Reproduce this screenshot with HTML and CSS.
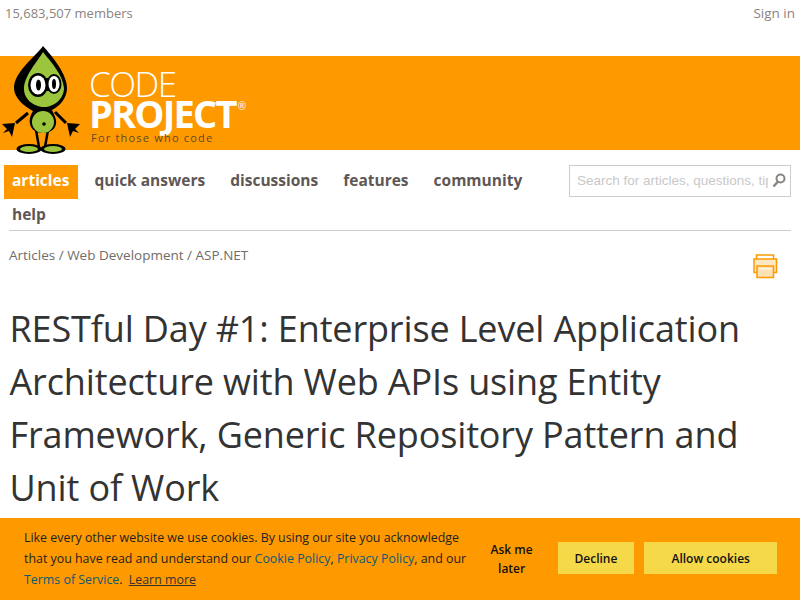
FILE: index.html
```html
<!DOCTYPE html>
<html lang="en">
<head>
    <meta charset="UTF-8">
    <meta name="viewport" content="width=device-width, initial-scale=1.0">
    <title>RESTful Day #1</title>
    <link rel="stylesheet" href="styles.css">
</head>
<body>
    <div class="top-bar">
        <span>15,683,507 members</span>
        <a href="#">Sign in</a>
    </div>
    <header class="banner">
        <svg class="mascot" width="82" height="112" viewBox="0 0 82 112">
            <!-- arms -->
            <path d="M28 69 L16 79 M55 68 L66 79" stroke="#000" stroke-width="3" fill="none"/>
            <path d="M2 80 L15 79 L12 93 L9 87 L3 89 L7 85 Z M80 80 L67 79 L70 93 L73 87 L79 89 L75 85 Z" fill="#000"/>
            <!-- legs -->
            <path d="M36 86 L39 103 M48 86 L45 103" stroke="#000" stroke-width="2.500" fill="none"/>
            <path d="M40 90 L42 103 L44 90 Z" fill="#f90"/>
            <!-- feet -->
            <ellipse cx="29" cy="105" rx="12.500" ry="5" fill="#000"/>
            <ellipse cx="53" cy="105" rx="12.500" ry="5" fill="#000"/>
            <ellipse cx="29" cy="105" rx="9" ry="3" fill="#9bc53d"/>
            <ellipse cx="53" cy="105" rx="9" ry="3" fill="#9bc53d"/>
            <!-- head and body -->
            <path d="M43 2 C36 12 14 28 14 44 C14 54 24 62 33 67 C30 72 29 76 30 80 C32 92 54 92 56 80 C57 75 54 71 52 66 C60 62 67 54 67 44 C67 30 52 12 43 2 Z" fill="#000"/>
            <path d="M43 8 C37 18 24 32 24 45 C24 56 35 63 44 63 C54 63 64 55 64 44 C63 31 51 18 43 8 Z" fill="#9bc53d"/>
            <ellipse cx="43" cy="78" rx="11" ry="11" fill="#9bc53d"/>
            <circle cx="44" cy="80" r="1.800" fill="#000"/>
            <!-- eyes -->
            <ellipse cx="38" cy="41" rx="10" ry="12" fill="#000"/>
            <ellipse cx="54" cy="40" rx="7.500" ry="10" fill="#000"/>
            <path d="M42 34 H52 V47 H42 Z" fill="#000"/>
            <ellipse cx="38" cy="41" rx="7.500" ry="9.500" fill="#fff"/>
            <ellipse cx="54" cy="40" rx="5.500" ry="8" fill="#fff"/>
            <ellipse cx="38.500" cy="41" rx="2.500" ry="5.500" fill="#000"/>
            <ellipse cx="54" cy="40" rx="2" ry="5" fill="#000"/>
        </svg>
        <div class="wordmark">
            <div class="word-code">CODE</div>
            <div class="word-project">PROJECT<sup>®</sup></div>
            <div class="word-tag">For those who code</div>
        </div>
    </header>
    <nav class="main-nav">
        <ul class="nav-list">
            <li class="active"><a href="#">articles</a></li>
            <li><a href="#">quick answers</a></li>
            <li><a href="#">discussions</a></li>
            <li><a href="#">features</a></li>
            <li><a href="#">community</a></li>
            <li><a href="#">help</a></li>
        </ul>
        <form class="search-box">
            <input type="text" placeholder="Search for articles, questions, tips">
            <svg width="14" height="15" viewBox="0 0 14 15">
                <circle cx="8.500" cy="5.500" r="4" fill="none" stroke="#8b8380" stroke-width="2"/>
                <path d="M6 8.500 L1.500 13.500" stroke="#8b8380" stroke-width="2.500"/>
            </svg>
        </form>
    </nav>
    <div class="crumb-row">
        <div class="breadcrumb">Articles / Web Development / ASP.NET</div>
        <svg class="print-icon" width="25" height="25" viewBox="0 0 25 25">
            <rect x="3.500" y="1" width="17" height="6" fill="#fff" stroke="#f90" stroke-width="1.500"/>
            <rect x="1" y="5" width="22.500" height="13.500" fill="#fde8c4" stroke="#f90" stroke-width="1.500"/>
            <rect x="4" y="12" width="16.500" height="11.500" fill="#fde2b4" stroke="#f90" stroke-width="1.500"/>
            <path d="M6 15 H19" stroke="#fff" stroke-width="1"/>
        </svg>
    </div>
    <h1 class="article-title">RESTful Day #1: Enterprise Level Application Architecture with Web APIs using Entity Framework, Generic Repository Pattern and Unit of Work</h1>

    <div class="cookie-bar">
        <p class="cookie-text">Like every other website we use cookies. By using our site you acknowledge that you have read and understand our <a href="#">Cookie Policy</a>, <a href="#">Privacy Policy</a>, and our <a href="#">Terms of Service</a>. <a href="#" class="learn">Learn more</a></p>
        <a href="#" class="ask-later">Ask me later</a>
        <button type="button" class="cookie-btn decline">Decline</button>
        <button type="button" class="cookie-btn allow">Allow cookies</button>
    </div>
</body>
</html>
```

FILE: styles.css
```css
body {
    margin: 0;
    font-family: "Open Sans", "Noto Sans", Arial, sans-serif;
    color: #333;
    background-color: white;
    height: 600px;
    overflow: hidden;
}
a {
    text-decoration: none;
}
.top-bar {
    display: flex;
    justify-content: space-between;
    height: 56px;
    padding: 4px 5px 0;
    box-sizing: border-box;
    font-size: 13px;
    line-height: 18px;
    color: #8b8380;
}
.top-bar a {
    color: #8b8380;
    font-size: 13.500px;
}

/* Orange banner */
.banner {
    display: flex;
    height: 94px;
    background-color: #f90;
}
.mascot {
    margin: -12px 0 0 0;
    flex-shrink: 0;
}
.wordmark {
    margin-left: 7px;
    color: white;
    font-family: "Open Sans", Arial, sans-serif;
}
.word-code {
    font-size: 35px;
    font-weight: 300;
    line-height: 28px;
    margin-top: 14px;
    letter-spacing: -1.500px;
}
.word-project {
    font-size: 38px;
    font-weight: 700;
    line-height: 31px;
    letter-spacing: -1.800px;
    white-space: nowrap;
}
.word-project sup {
    font-size: 10px;
    font-weight: 400;
    letter-spacing: 0;
    vertical-align: 18px;
    line-height: 0;
    margin-left: 2px;
}
.word-tag {
    margin: 2px 0 0 2px;
    font-size: 11px;
    line-height: 14px;
    letter-spacing: 1.200px;
    color: #5c4a2c;
    font-weight: 400;
    white-space: nowrap;
}

/* Main navigation */
.main-nav {
    display: flex;
    justify-content: space-between;
    align-items: flex-start;
    margin: 15px 9px 0 4px;
}
.nav-list {
    list-style: none;
    display: flex;
    flex-wrap: wrap;
    align-content: flex-start;
    margin: 0;
    padding: 0;
    width: 540px;
    height: 65px;
    font-size: 15.500px;
    font-weight: 700;
    line-height: 30px;
}
.nav-list li {
    padding: 0 8px 4px;
    margin-right: 9px;
    height: 30px;
}
.nav-list a {
    color: #5f5755;
}
.nav-list li.active {
    padding-right: 9px;
    margin-right: 8px;
    background-color: #f90;
}
.nav-list li.active a {
    color: white;
}
.search-box {
    display: flex;
    align-items: center;
    width: 222px;
    height: 32px;
    box-sizing: border-box;
    border: 1px solid #ccc;
    padding: 0 4px 2px 7px;
}
.search-box input {
    flex: 1;
    min-width: 0;
    border: none;
    outline: none;
    padding: 0;
    font-family: "Liberation Sans", Arial, sans-serif;
    font-size: 13.500px;
    background: transparent;
}
.search-box input::placeholder {
    color: #c8c8c8;
}
.search-box svg {
    margin-left: 4px;
}

/* Breadcrumb and title */
.crumb-row {
    display: flex;
    justify-content: space-between;
    margin: 0 9px;
    padding-top: 15px;
    border-top: 1px solid #ccc;
}
.breadcrumb {
    font-size: 13.500px;
    line-height: 18px;
    color: #706c69;
}
.print-icon {
    margin: 8px 13px 0 0;
}
.article-title {
    margin: 23px 50px 0 9.500px;
    font-size: 36px;
    font-weight: 400;
    line-height: 53px;
    letter-spacing: -0.140px;
    color: #333;
}

/* Cookie bar */
.cookie-bar {
    position: fixed;
    left: 0;
    right: 0;
    bottom: 0;
    height: 82px;
    box-sizing: border-box;
    display: flex;
    align-items: center;
    padding: 0 23px 2px 24px;
    background-color: #f90;
    color: #222;
    font-size: 12.400px;
}
.cookie-text {
    width: 450px;
    margin: 0;
    line-height: 21px;
}
.cookie-text a {
    color: #0a5a78;
}
.cookie-text a.learn {
    color: #333;
    text-decoration: underline;
    margin-left: 3px;
}
.ask-later {
    width: 56px;
    margin: 2px 18px 0 11px;
    text-align: center;
    color: #111;
    font-size: 12px;
    font-weight: 600;
    line-height: 19px;
}
.cookie-btn {
    height: 32px;
    border: none;
    background-color: #f5d949;
    color: #111;
    font-family: inherit;
    font-size: 12px;
    font-weight: 600;
    cursor: pointer;
}
.decline {
    width: 77px;
    margin-right: 10px;
}
.allow {
    width: 133px;
}
```
